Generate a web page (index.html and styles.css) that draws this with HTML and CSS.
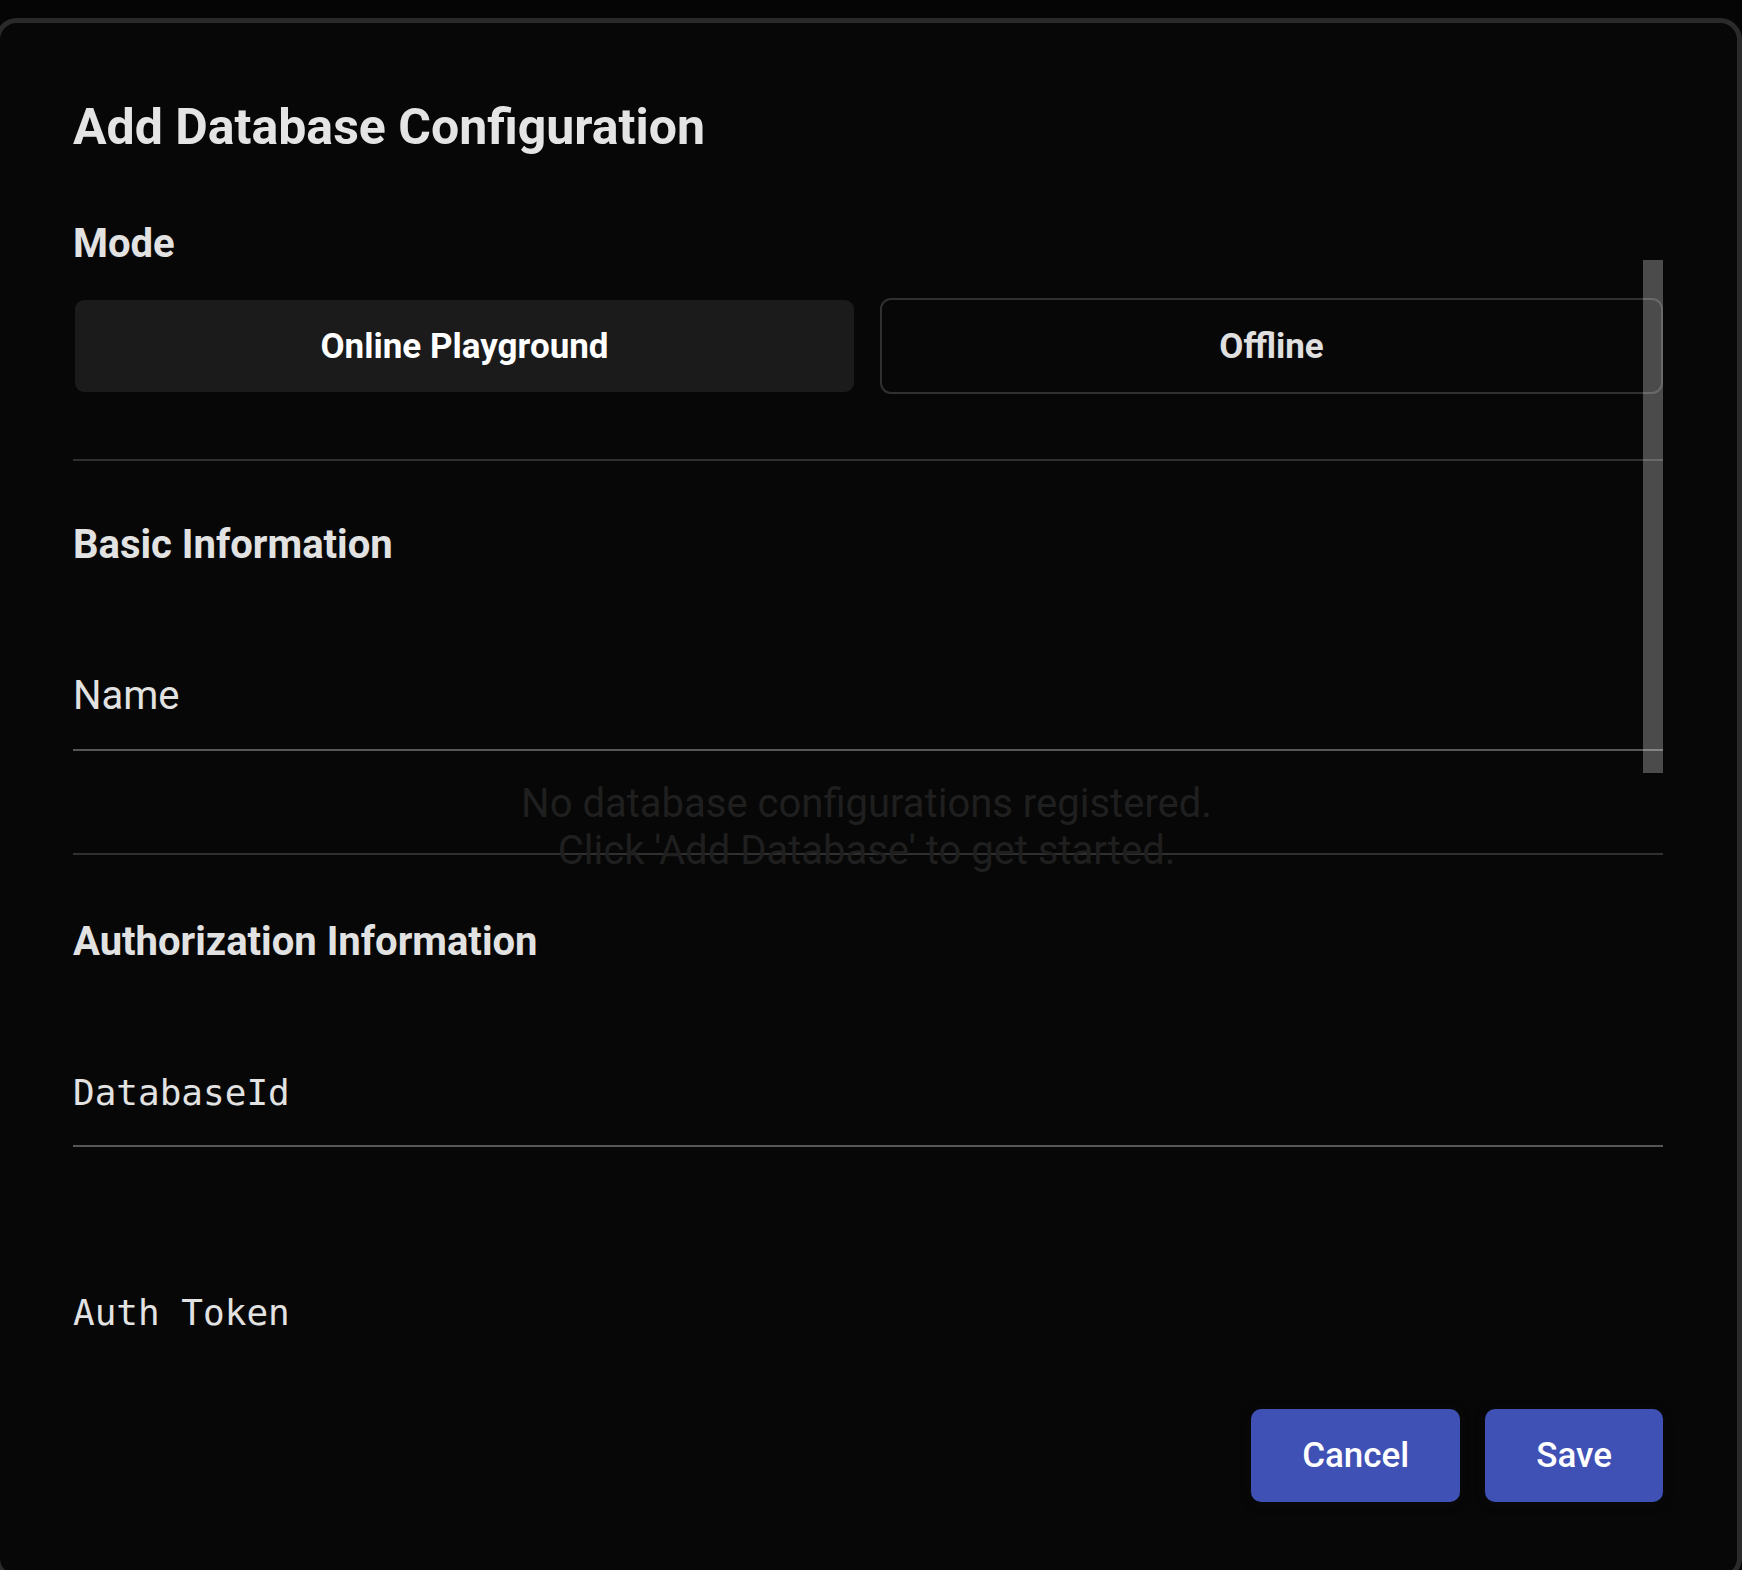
FILE: index.html
```html
<!DOCTYPE html>
<html lang="en">
<head>
<meta charset="utf-8">
<title>Add Database Configuration</title>
<link rel="stylesheet" href="styles.css">
</head>
<body>
<div class="dialog">
  <div class="scroll-thumb"></div>
  <h2 class="dialog-title">Add Database Configuration</h2>
  <h3 class="section-title mode-title">Mode</h3>
  <div class="dialog-content">
    <div class="toggle-group">
      <button class="toggle toggle-active">Online Playground</button>
      <button class="toggle toggle-outline">Offline</button>
    </div>
    <div class="divider divider-first"></div>
    <h3 class="section-title basic-title">Basic Information</h3>
    <div class="field field-name">
      <span class="field-label">Name</span>
    </div>
    <div class="divider divider-second"></div>
    <h3 class="section-title auth-title">Authorization Information</h3>
    <div class="field field-dbid">
      <span class="field-label mono">DatabaseId</span>
    </div>
    <div class="field field-token">
      <span class="field-label mono">Auth Token</span>
    </div>
  </div>
  <div class="dialog-actions">
    <button class="action-btn">Cancel</button>
    <button class="action-btn">Save</button>
  </div>
  <div class="empty-state">
    <div>No database configurations registered.</div>
    <div>Click 'Add Database' to get started.</div>
  </div>
</div>
</body>
</html>
```

FILE: styles.css
```css
html, body {
  margin: 0;
  padding: 0;
  background: #050505;
  overflow: hidden;
  height: 100%;
}

body {
  font-family: Roboto, "Liberation Sans", Arial, sans-serif;
  color: #e3e3e3;
}

.dialog {
  position: relative;
  box-sizing: border-box;
  margin: 18px 0 0 -5px;
  width: 1747px;
  height: 1562px;
  border: 5px solid #2a2a2a;
  border-radius: 22px;
  background: #070707;
  padding: 74px 74px 0 73px;
  display: flex;
  flex-direction: column;
}

.dialog-title {
  position: relative;
  margin: 0;
  font-size: 50px;
  line-height: 60px;
  font-weight: 700;
  color: #e4e4e4;
}

.section-title {
  position: relative;
  margin: 0;
  font-size: 40px;
  line-height: 48px;
  font-weight: 700;
  color: #e2e2e2;
}

.mode-title {
  margin-top: 63px;
}

.dialog-content {
  position: relative;
  height: 1082px;
  overflow: hidden;
  display: flex;
  flex-direction: column;
}

.toggle-group {
  margin-top: 30px;
  display: grid;
  grid-template-columns: 1fr 1fr;
  gap: 24px;
}

.toggle {
  box-sizing: border-box;
  height: 96px;
  border-radius: 11px;
  font-family: Roboto, "Liberation Sans", Arial, sans-serif;
  font-size: 35px;
  font-weight: 700;
  display: flex;
  align-items: center;
  justify-content: center;
  padding: 0;
}

.toggle-active {
  border: 2px solid transparent;
  background: #1b1b1b;
  background-clip: padding-box;
  color: #ffffff;
}

.toggle-outline {
  border: 2px solid rgba(255, 255, 255, 0.17);
  background: transparent;
  color: #e0e0e0;
}

.divider {
  height: 2px;
  background: rgba(255, 255, 255, 0.17);
  flex: none;
}

.divider-first {
  margin-top: 65px;
}

.basic-title {
  margin-top: 60px;
}

.divider-second {
  margin-top: 102px;
}

.auth-title {
  margin-top: 63px;
}

.field {
  flex: none;
  border-bottom: 2px solid rgba(255, 255, 255, 0.32);
  display: flex;
}

.field-name {
  margin-top: 103px;
  padding-bottom: 29px;
}

.field-dbid {
  margin-top: 105px;
  padding-bottom: 30px;
}

.field-token {
  margin-top: 144px;
  padding-bottom: 31px;
}

.field-label {
  font-size: 40px;
  line-height: 48px;
  font-weight: 400;
  color: #e2e2e2;
}

.field-label.mono {
  font-family: "DejaVu Sans Mono", "Liberation Mono", monospace;
  font-size: 36px;
  line-height: 44px;
}

.dialog-actions {
  position: relative;
  margin-top: 59px;
  display: flex;
  justify-content: flex-end;
  gap: 25px;
}

.action-btn {
  height: 93px;
  padding: 0 51px;
  border: none;
  border-radius: 10px;
  background: #3f51b5;
  color: #ffffff;
  font-family: Roboto, "Liberation Sans", Arial, sans-serif;
  font-size: 35px;
  font-weight: 500;
  box-shadow: 0 3px 4px rgba(0, 0, 0, 0.3), 0 2px 10px rgba(20, 20, 20, 0.6);
}

.scroll-thumb {
  position: absolute;
  top: 237px;
  right: 74px;
  width: 20px;
  height: 513px;
  background: #4b4b4b;
}

.empty-state {
  position: absolute;
  top: 757px;
  left: 0;
  width: 1733px;
  text-align: center;
  font-size: 40px;
  line-height: normal;
  color: #1f1f1f;
  pointer-events: none;
}
```
